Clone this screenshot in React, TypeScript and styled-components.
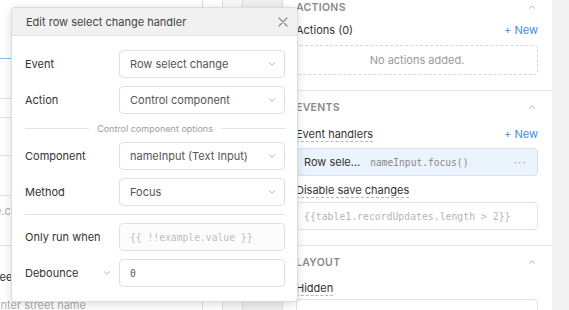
import React from 'react';
import styled, { createGlobalStyle } from 'styled-components';

const GlobalStyle = createGlobalStyle`
  html, body {
    margin: 0;
    padding: 0;
    background: #ffffff;
    font-family: Inter, "Noto Sans", sans-serif;
    -webkit-font-smoothing: antialiased;
  }
  * {
    box-sizing: border-box;
  }
`;

const mono = `"DejaVu Sans Mono", "Liberation Mono", monospace`;

const Page = styled.div`
  display: flex;
  width: 569px;
  height: 310px;
  overflow: hidden;
  position: relative;
  font-size: 11px;
`;

/* ---------- canvas behind the popover ---------- */

const Canvas = styled.div`
  flex: 0 0 284px;
  display: flex;
  overflow: hidden;
  background: #ffffff;
`;

const FormColumn = styled.div`
  flex: 0 0 202px;
  display: flex;
  flex-direction: column;
  overflow: hidden;
`;

const FormLine = styled.div<{ $h: number; $accent?: boolean }>`
  flex: 0 0 ${({ $h }) => $h}px;
  border-bottom: 1px solid ${({ $accent }) => ($accent ? '#8ab8ee' : '#e2e2e2')};
`;

const GhostRow = styled.div<{ $h: number }>`
  flex: 0 0 ${({ $h }) => $h}px;
  display: flex;
  align-items: center;
`;

const GhostText = styled.span<{ $shift: number; $muted?: boolean }>`
  margin-left: ${({ $shift }) => $shift}px;
  font-size: 11px;
  white-space: nowrap;
  color: ${({ $muted }) => ($muted ? '#ababab' : '#333333')};
`;

const ToolColumn = styled.div<{ $w: number; $bg: string }>`
  flex: 0 0 ${({ $w }) => $w}px;
  background: ${({ $bg }) => $bg};
  border-left: 1px solid #dddddd;
`;

/* ---------- inspector ---------- */

const Inspector = styled.div`
  flex: 0 0 268px;
  display: flex;
  flex-direction: column;
  margin-top: -9px;
  background: #ffffff;
  color: #333333;
`;

const Section = styled.section<{ $first?: boolean }>`
  display: flex;
  flex-direction: column;
  padding: 8px 14px 15px 12px;
  border-top: ${({ $first }) => ($first ? 'none' : '1px solid #e4e4e4')};
`;

const SectionHeader = styled.div`
  height: 16px;
  display: flex;
  align-items: center;
  justify-content: space-between;
  font-size: 10.5px;
  font-weight: 600;
  letter-spacing: 0.3px;
  color: #8a8a8a;
  padding-right: 2px;
`;

const LabelRow = styled.div<{ $mt: number }>`
  height: 20px;
  margin-top: ${({ $mt }) => $mt}px;
  display: flex;
  align-items: center;
  justify-content: space-between;
`;

const Dotted = styled.span`
  border-bottom: 1px dashed #b8b8b8;
  line-height: 14px;
`;

const NewLink = styled.span`
  color: #3d8fe6;
`;

const EmptyBox = styled.div`
  margin-top: 5px;
  height: 30px;
  border: 1px dashed #d6d6d6;
  border-radius: 4px;
  display: flex;
  align-items: center;
  justify-content: center;
  color: #9a9a9a;
`;

const HandlerRow = styled.div`
  margin-top: 4px;
  height: 28px;
  border: 1px solid #d3e1f2;
  background: #ebf3fd;
  border-radius: 4px;
  display: flex;
  align-items: center;
  padding: 0 10px 0 7px;
  gap: 10px;
`;

const HandlerName = styled.span`
  color: #333333;
`;

const HandlerCode = styled.span`
  flex: 1;
  font-family: ${mono};
  font-size: 9.6px;
  color: #8a8a8a;
`;

const Dots = styled.span`
  color: #aaaaaa;
  letter-spacing: 1px;
  font-size: 12px;
`;

const CodeInput = styled.div<{ $mt: number }>`
  margin-top: ${({ $mt }) => $mt}px;
  height: 28px;
  border: 1px solid #e3e3e3;
  border-radius: 4px;
  display: flex;
  align-items: center;
  padding: 0 7px;
  font-family: ${mono};
  font-size: 9.8px;
  color: #b5b5b5;
  white-space: nowrap;
  background: #ffffff;
`;

const Strip = styled.div`
  flex: 1;
  background: #f3f3f3;
`;

/* ---------- popover ---------- */

const Popover = styled.div`
  position: absolute;
  left: 11px;
  top: 7px;
  width: 287px;
  height: 295px;
  background: #ffffff;
  border: 1px solid #dcdcdc;
  border-radius: 4px;
  box-shadow: 0 2px 10px rgba(0, 0, 0, 0.14);
  overflow: hidden;
  display: flex;
  flex-direction: column;
`;

const PopHeader = styled.div`
  flex: 0 0 28px;
  background: #f1f1f1;
  border-bottom: 1px solid #e2e2e2;
  display: flex;
  align-items: center;
  justify-content: space-between;
  padding: 0 9px 0 14px;
  font-size: 11px;
  color: #444444;
`;

const PopBody = styled.div`
  display: flex;
  flex-direction: column;
  gap: 8px;
  padding: 14px 12px 0 13px;
`;

const FieldRow = styled.div`
  display: flex;
  align-items: center;
  height: 28px;
`;

const FieldLabel = styled.div`
  flex: 0 0 94px;
  display: flex;
  align-items: center;
  justify-content: space-between;
  padding-right: 8px;
  color: #333333;
`;

const Field = styled.div<{ $code?: boolean; $muted?: boolean; $tint?: boolean }>`
  flex: 1;
  height: 28px;
  border: 1px solid #e0e0e0;
  border-radius: 4px;
  display: flex;
  align-items: center;
  justify-content: space-between;
  padding: 0 8px 0 10px;
  background: ${({ $tint }) => ($tint ? '#fcfcfc' : '#ffffff')};
  color: ${({ $muted }) => ($muted ? '#bdbdbd' : '#555555')};
  font-family: ${({ $code }) => ($code ? mono : 'inherit')};
  font-size: ${({ $code }) => ($code ? '9.7px' : '11px')};
  white-space: nowrap;
`;

const GroupDivider = styled.div`
  height: 12px;
  display: flex;
  align-items: center;
  gap: 8px;
  font-size: 9px;
  color: #9d9d9d;
  &::before,
  &::after {
    content: '';
    flex: 1;
    height: 1px;
    background: #e2e2e2;
  }
`;

const Rule = styled.div`
  height: 1px;
  background: #e2e2e2;
`;

const Chevron = ({ up = false, color = '#b4b4b4' }: { up?: boolean; color?: string }) => (
  <svg width="8" height="6" viewBox="0 0 8 6" fill="none">
    <path
      d={up ? 'M1.5 4.2 L4 1.8 L6.5 4.2' : 'M1.5 1.8 L4 4.2 L6.5 1.8'}
      stroke={color}
      strokeWidth="1"
      strokeLinecap="round"
      strokeLinejoin="round"
    />
  </svg>
);

const CloseIcon = () => (
  <svg width="10" height="10" viewBox="0 0 10 10" fill="none">
    <path d="M1 1 L9 9 M9 1 L1 9" stroke="#8c8c8c" strokeWidth="1.2" strokeLinecap="round" />
  </svg>
);

const SelectField: React.FC<{ value: string }> = ({ value }) => (
  <Field>
    {value}
    <Chevron />
  </Field>
);

export default function App() {
  return (
    <>
      <GlobalStyle />
      <Page>
        <Canvas>
          <FormColumn>
            <FormLine $h={59} $accent />
            <FormLine $h={40} />
            <FormLine $h={19} />
            <FormLine $h={38} />
            <FormLine $h={40} />
            <GhostRow $h={30}>
              <GhostText $shift={-5} $muted>e.com</GhostText>
            </GhostRow>
            <FormLine $h={20} />
            <GhostRow $h={20} />
            <GhostRow $h={22}>
              <GhostText $shift={-15}>Street</GhostText>
            </GhostRow>
            <GhostRow $h={34}>
              <GhostText $shift={-6} $muted>Enter street name</GhostText>
            </GhostRow>
          </FormColumn>
          <ToolColumn $w={20} $bg="#ffffff" />
          <ToolColumn $w={20} $bg="#f7f7f7" />
          <ToolColumn $w={40} $bg="#efefef" />
          <ToolColumn $w={2} $bg="#ffffff" />
        </Canvas>

        <Inspector>
          <Section $first>
            <SectionHeader>
              ACTIONS
              <Chevron up />
            </SectionHeader>
            <LabelRow $mt={5}>
              <span>Actions (0)</span>
              <NewLink>+ New</NewLink>
            </LabelRow>
            <EmptyBox>No actions added.</EmptyBox>
          </Section>

          <Section>
            <SectionHeader>
              EVENTS
              <Chevron up />
            </SectionHeader>
            <LabelRow $mt={9}>
              <Dotted>Event handlers</Dotted>
              <NewLink>+ New</NewLink>
            </LabelRow>
            <HandlerRow>
              <HandlerName>Row sele...</HandlerName>
              <HandlerCode>nameInput.focus()</HandlerCode>
              <Dots>···</Dots>
            </HandlerRow>
            <LabelRow $mt={4}>
              <Dotted>Disable save changes</Dotted>
            </LabelRow>
            <CodeInput $mt={2}>{'{{table1.recordUpdates.length > 2}}'}</CodeInput>
          </Section>

          <Section>
            <SectionHeader>
              LAYOUT
              <Chevron up />
            </SectionHeader>
            <LabelRow $mt={8}>
              <Dotted>Hidden</Dotted>
            </LabelRow>
            <CodeInput $mt={1} />
          </Section>
        </Inspector>

        <Strip />

        <Popover>
          <PopHeader>
            Edit row select change handler
            <CloseIcon />
          </PopHeader>
          <PopBody>
            <FieldRow>
              <FieldLabel>Event</FieldLabel>
              <SelectField value="Row select change" />
            </FieldRow>
            <FieldRow>
              <FieldLabel>Action</FieldLabel>
              <SelectField value="Control component" />
            </FieldRow>
            <GroupDivider>Control component options</GroupDivider>
            <FieldRow>
              <FieldLabel>Component</FieldLabel>
              <SelectField value="nameInput (Text Input)" />
            </FieldRow>
            <FieldRow>
              <FieldLabel>Method</FieldLabel>
              <SelectField value="Focus" />
            </FieldRow>
            <Rule />
            <FieldRow>
              <FieldLabel>Only run when</FieldLabel>
              <Field $code $muted $tint>{'{{ !!example.value }}'}</Field>
            </FieldRow>
            <FieldRow>
              <FieldLabel>
                Debounce
                <Chevron />
              </FieldLabel>
              <Field $code>0</Field>
            </FieldRow>
          </PopBody>
        </Popover>
      </Page>
    </>
  );
}
